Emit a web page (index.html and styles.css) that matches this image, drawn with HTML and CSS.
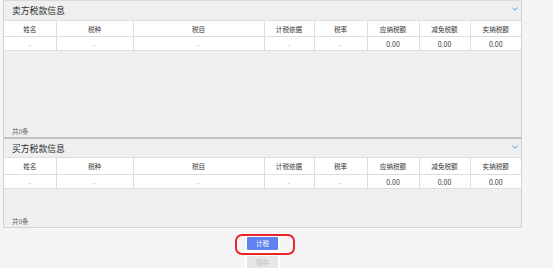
FILE: index.html
```html
<!DOCTYPE html>
<html lang="zh-CN">
<head>
    <meta charset="UTF-8">
    <meta name="viewport" content="width=device-width, initial-scale=1.0">
    <title>税款信息</title>
    <link rel="stylesheet" href="styles.css">
</head>

<body>
    <div class="wrap">
        <!-- 卖方 -->
        <div class="panel">
            <div class="panel-head">
                <span class="panel-title">卖方税款信息</span>
                <svg class="chevron" width="6" height="4" viewBox="0 0 6 4"><path d="M0.5 0.8 L3 3.2 L5.5 0.8" fill="none" stroke="#4a90e2" stroke-width="1"/></svg>
            </div>
            <div class="panel-body tall">
                <table class="tax-table">
                    <colgroup>
                        <col style="width:52px"><col style="width:77px"><col style="width:131px"><col style="width:50px">
                        <col style="width:53px"><col style="width:52px"><col style="width:51px"><col>
                    </colgroup>
                    <tr>
                        <th>姓名</th><th>税种</th><th>税目</th><th>计税依据</th><th>税率</th><th>应纳税额</th><th>减免税额</th><th>实纳税额</th>
                    </tr>
                    <tr>
                        <td>-</td><td>-</td><td>-</td><td>-</td><td>-</td><td class="num">0.00</td><td class="num">0.00</td><td class="num">0.00</td>
                    </tr>
                </table>
            </div>
            <div class="panel-foot">共0条</div>
        </div>

        <!-- 买方 -->
        <div class="panel second">
            <div class="panel-head">
                <span class="panel-title">买方税款信息</span>
                <svg class="chevron" width="6" height="4" viewBox="0 0 6 4"><path d="M0.5 0.8 L3 3.2 L5.5 0.8" fill="none" stroke="#4a90e2" stroke-width="1"/></svg>
            </div>
            <div class="panel-body short">
                <table class="tax-table">
                    <colgroup>
                        <col style="width:52px"><col style="width:77px"><col style="width:131px"><col style="width:50px">
                        <col style="width:53px"><col style="width:52px"><col style="width:51px"><col>
                    </colgroup>
                    <tr>
                        <th>姓名</th><th>税种</th><th>税目</th><th>计税依据</th><th>税率</th><th>应纳税额</th><th>减免税额</th><th>实纳税额</th>
                    </tr>
                    <tr>
                        <td>-</td><td>-</td><td>-</td><td>-</td><td>-</td><td class="num">0.00</td><td class="num">0.00</td><td class="num">0.00</td>
                    </tr>
                </table>
            </div>
            <div class="panel-foot">共0条</div>
        </div>

        <div class="actions">
            <div class="btn-box">
                <button class="btn btn-primary">计税</button>
                <button class="btn btn-disabled">保存</button>
                <!-- 红框标注 -->
                <div class="mark"></div>
            </div>
        </div>
    </div>
</body>
</html>
```

FILE: styles.css
```css
body {
    margin: 0;
    background: #f5f5f5;
    font-family: "Noto Sans CJK SC", "Liberation Sans", sans-serif;
    color: #333;
    overflow: hidden;
}

.wrap {
    width: 519px;
    margin-left: 3px;
}

.panel {
    background: #efefef;
    border: 1px solid #d2d2d2;
    border-top-color: #dcdcdc;
}

.panel.second {
    border-top-color: #c4c4c4;
}

.panel:first-child {
    border-bottom-color: #c0c0c0;
}

.panel-head {
    height: 19px;
    display: flex;
    align-items: center;
    justify-content: space-between;
    padding: 0 3px 0 8px;
}

.second .panel-head {
    height: 18px;
}

.panel-title {
    font-size: 8.8px;
    color: #2b2b2b;
}

.chevron {
    display: block;
    margin-top: -3px;
}

.panel-body.tall {
    height: 105px;
}

.panel-body.short {
    height: 58px;
}

.tax-table {
    width: 100%;
    border-collapse: collapse;
    table-layout: fixed;
    background: #fff;
}

.tax-table th,
.tax-table td {
    border: 1px solid #dedede;
    text-align: center;
    padding: 0;
    white-space: nowrap;
    overflow: hidden;
}

.tax-table th:first-child,
.tax-table td:first-child {
    border-left: none;
}

.tax-table th:last-child,
.tax-table td:last-child {
    border-right: none;
}

.tax-table th {
    height: 15px;
    font-size: 6.6px;
    font-weight: normal;
    color: #333;
}

.second .tax-table th {
    height: 16px;
}

.tax-table td {
    height: 13px;
    font-size: 6.6px;
    color: #999;
}

.tax-table td.num {
    font-size: 7px;
    color: #333;
}

.panel-foot {
    height: 12px;
    line-height: 12px;
    padding-left: 8px;
    font-size: 6.5px;
    color: #666;
}

.actions {
    display: flex;
    justify-content: center;
    padding-top: 6px;
}

.btn-box {
    position: relative;
    display: flex;
    flex-direction: column;
    align-items: center;
    gap: 6px;
    background: #fff;
    padding: 3px 2px 0;
}

.btn {
    width: 31px;
    height: 13px;
    border: none;
    border-radius: 1px;
    padding: 0;
    font-family: inherit;
    font-size: 6.6px;
    line-height: 13px;
}

.btn-primary {
    background: #5f82ee;
    color: #fff;
}

.btn-disabled {
    background: #e6e6e6;
    color: #c2c2c2;
}

.mark {
    position: absolute;
    left: -10px;
    top: 0;
    width: 56px;
    height: 17px;
    border: 2px solid #e8242c;
    border-radius: 7px;
}
```
